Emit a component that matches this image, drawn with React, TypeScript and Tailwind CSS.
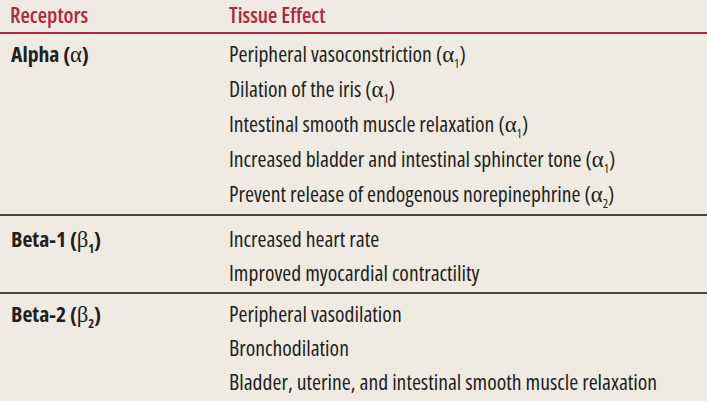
import React from "react";

const Greek = ({ g, n }: { g: string; n?: string }) => (
  <span>
    (<span className="font-['Liberation_Serif',serif] font-normal text-[1.05em]">{g}</span>
    {n && <sub className="text-[0.58em] align-[-0.25em]">{n}</sub>})
  </span>
);

type Row = { label: React.ReactNode; effects: React.ReactNode[]; pt: string; pb: string; border: string };

const rows: Row[] = [
  {
    label: (
      <>
        Alpha <Greek g="α" />
      </>
    ),
    effects: [
      <>Peripheral vasoconstriction <Greek g="α" n="1" /></>,
      <>Dilation of the iris <Greek g="α" n="1" /></>,
      <>Intestinal smooth muscle relaxation <Greek g="α" n="1" /></>,
      <>Increased bladder and intestinal sphincter tone <Greek g="α" n="1" /></>,
      <>Prevent release of endogenous norepinephrine <Greek g="α" n="2" /></>,
    ],
    pt: "pt-[3px]",
    pb: "pb-[2px]",
    border: "border-b-2",
  },
  {
    label: (
      <>
        Beta-1 <Greek g="β" n="1" />
      </>
    ),
    effects: [<>Increased heart rate</>, <>Improved myocardial contractility</>],
    pt: "pt-[6px]",
    pb: "pb-[2px]",
    border: "border-b-2",
  },
  {
    label: (
      <>
        Beta-2 <Greek g="β" n="2" />
      </>
    ),
    effects: [
      <>Peripheral vasodilation</>,
      <>Bronchodilation</>,
      <>Bladder, uterine, and intestinal smooth muscle relaxation</>,
    ],
    pt: "pt-[3px]",
    pb: "pb-[2px]",
    border: "border-b-[3px]",
  },
];

export default function App() {
  return (
    <div className="w-[707px] h-[401px] overflow-hidden bg-[#efebe2] text-[#231f20] font-['Open_Sans',sans-serif] [font-stretch:75%] text-[21.7px] font-medium">
      <div className="flex pb-[3px] text-[#b3253b] text-[21.5px] font-semibold leading-[29px] border-b-2 border-[#b3253b]">
        <div className="w-[229px] pl-[10px]">Receptors</div>
        <div>Tissue Effect</div>
      </div>
      {rows.map((r, i) => (
        <div key={i} className={`flex ${r.pt} ${r.pb} ${r.border} border-[#4a4644]`}>
          <div className="w-[229px] pl-[11px] font-bold leading-[34px]">{r.label}</div>
          <div className="flex flex-col">
            {r.effects.map((e, j) => (
              <div key={j} className="leading-[34px]">
                {e}
              </div>
            ))}
          </div>
        </div>
      ))}
    </div>
  );
}
